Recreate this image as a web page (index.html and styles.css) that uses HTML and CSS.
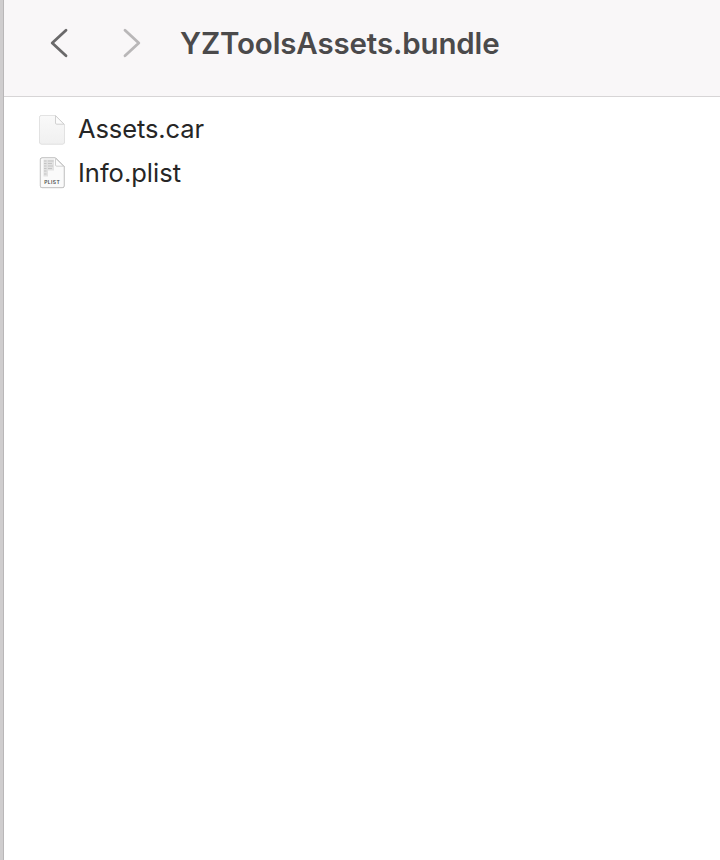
FILE: index.html
```html
<!DOCTYPE html>
<html lang="en">
<head>
<meta charset="utf-8">
<title>YZToolsAssets.bundle</title>
<link rel="stylesheet" href="styles.css">
</head>
<body>
<div class="window">
  <header class="toolbar">
    <svg class="chevron back" viewBox="0 0 20 32"><path d="M17 3.2 3.2 16 17 28.8"/></svg>
    <svg class="chevron forward" viewBox="0 0 20 32"><path d="M3 3.2 16.8 16 3 28.8"/></svg>
    <h1 class="title">YZToolsAssets.bundle</h1>
  </header>
  <main class="files">
    <div class="file">
      <svg class="icon" viewBox="0 0 32 38">
        <defs>
          <linearGradient id="page" x1="0" y1="0" x2="0" y2="1"><stop offset="0" stop-color="#f9f9f9"/><stop offset="1" stop-color="#f0f0f0"/></linearGradient>
        </defs>
        <path class="sheet" fill="url(#page)" d="M5.500 5.500H19.500L28.500 14.500V32a2 2 0 0 1-2 2H5.500a2 2 0 0 1-2-2V7.500a2 2 0 0 1 2-2Z"/>
        <path class="fold" d="M19.500 5.700V13a1.200 1.200 0 0 0 1.200 1.200H28Z"/>
      </svg>
      <span class="name car">Assets.car</span>
    </div>
    <div class="file">
      <svg class="icon" viewBox="0 0 32 38">
        <path class="sheet plist" d="M6 4H19.500L28 12.500V32a1.600 1.600 0 0 1-1.600 1.600H6A1.600 1.600 0 0 1 4.400 32V5.600A1.600 1.600 0 0 1 6 4Z"/>
        <path class="shade" d="M7.500 5.500H18v11h-6v6H7.500Z"/>
        <path class="rows" d="M8 7h2.500M12 7h5.500M8 9.500h2.500M12 9.500h4M8 12h2.500M12 12h5M8 14.500h2.500M12 14.500h4M8 17h2.500M8 20h2.500"/>
        <path class="fold" d="M19.500 4.300V11a1.200 1.200 0 0 0 1.200 1.200H27.500Z"/>
        <text class="label" x="8.200" y="29.900" textLength="15.500">PLIST</text>
      </svg>
      <span class="name">Info.plist</span>
    </div>
  </main>
</div>
</body>
</html>
```
FILE: styles.css
```css
* { box-sizing: border-box; }
body {
  margin: 0;
  background: #fff;
  font-family: Inter, "Liberation Sans", sans-serif;
}
.window {
  height: 860px;
  border-left: 3px solid #cfcdce;
  box-shadow: inset 1px 0 #b9b7b8;
  padding-left: 1px;
  overflow: hidden;
}
.toolbar {
  display: flex;
  align-items: center;
  height: 97px;
  padding: 0 0 10px 45px;
  background: #f9f7f8;
  border-bottom: 1px solid #d7d5d6;
}
.chevron {
  width: 20px;
  height: 32px;
  fill: none;
  stroke-width: 2.8;
  stroke-linecap: round;
  stroke-linejoin: round;
}
.back { stroke: #6a696a; }
.forward { margin-left: 53px; stroke: #b9b7b8; }
.title {
  margin: 0 0 0 38px;
  font-size: 29.5px;
  line-height: 36px;
  font-weight: 600;
  letter-spacing: -0.14px;
  color: #4b4a4b;
}
.files { padding: 10px 0 0 32px; }
.file {
  display: flex;
  align-items: center;
  height: 44px;
}
.icon {
  width: 32px;
  height: 38px;
  margin-right: 10px;
}
.sheet {
  stroke: #e2e2e2;
  stroke-width: .7;
  filter: drop-shadow(0 .6px .5px rgba(0, 0, 0, .22));
}
.plist {
  fill: #fafafa;
  stroke: #d0d0d0;
  filter: drop-shadow(0 .9px .6px rgba(0, 0, 0, .6));
}
.fold { fill: #fcfcfc; stroke: #c6c6c6; stroke-width: .8; }
.rows { fill: none; stroke: #c4c4c4; stroke-width: 1.1; }
.shade { fill: #e2e2e2; }
.label { font: 600 5px Inter, sans-serif; fill: #4a4a4a; }
.name {
  font-size: 25.5px;
  line-height: 32px;
  color: #262626;
}
.car { letter-spacing: -0.1px; }
```
